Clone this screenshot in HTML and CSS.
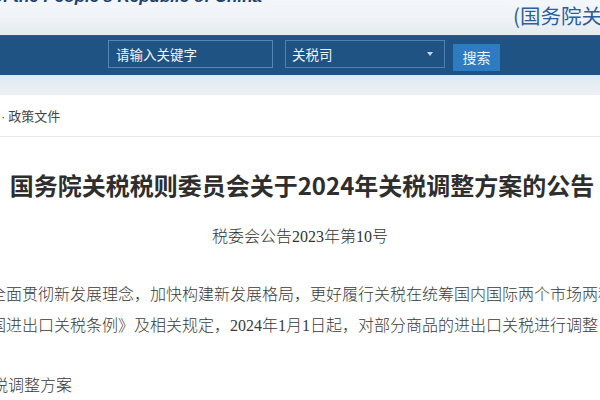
FILE: index.html
```html
<!DOCTYPE html>
<html lang="zh-CN">
<head>
<meta charset="utf-8">
<title>国务院关税税则委员会关于2024年关税调整方案的公告</title>
<link rel="stylesheet" href="styles.css">
</head>
<body>
<header class="top">
  <div class="en-box"><span class="en">Customs Tariff Commission of the State Council of the People's Republic of China</span></div>
  <div class="cn-box">(国务院关税税则委员会)</div>
</header>
<nav class="navbar">
  <div class="search-input">请输入关键字</div>
  <div class="search-select"><span>关税司</span><span class="caret"></span></div>
  <button class="search-btn">搜索</button>
</nav>
<div class="banner-strip"></div>
<div class="crumb"><span class="dot">·</span> 政策文件</div>
<main class="article">
  <h1 class="title">国务院关税税则委员会关于2024年关税调整方案的公告</h1>
  <p class="docno">税委会公告2023年第10号</p>
  <p class="para">全面贯彻新发展理念，加快构建新发展格局，更好履行关税在统筹国内国际两个市场两种资源中的作用，根据《中华人民共和<br>国进出口关税条例》及相关规定，2024年1月1日起，对部分商品的进出口关税进行调整，具体如下。</p>
  <p class="section">税调整方案</p>
</main>
</body>
</html>
```
FILE: styles.css
```css
html, body {
  margin: 0;
  padding: 0;
  overflow: hidden;
  background: #ffffff;
}
body {
  width: 600px;
  height: 400px;
  font-family: "Noto Sans CJK SC", sans-serif;
  color: #333;
}
.top {
  height: 35px;
  display: flex;
  align-items: flex-start;
  overflow: hidden;
  background: linear-gradient(180deg, #f4f7fa 0%, #eef2f6 60%, #e4eaf0 100%);
}
.en-box {
  width: 262px;
  flex: none;
  display: flex;
  justify-content: flex-end;
  overflow: hidden;
  height: 35px;
}
.en {
  white-space: nowrap;
  font-family: "Liberation Sans", Arial, sans-serif;
  font-weight: bold;
  font-style: italic;
  font-size: 17px;
  line-height: 17px;
  color: #22406c;
  margin-top: -12px;
}
.cn-box {
  flex: none;
  margin-left: 251px;
  white-space: nowrap;
  font-size: 20.5px;
  line-height: 22px;
  margin-top: 4px;
  color: #2c5f9e;
}
.navbar {
  height: 40px;
  background: #1f5383;
  display: flex;
  align-items: flex-start;
  padding-left: 108px;
  box-sizing: border-box;
  border-top: 1px solid #2a6094;
}
.search-input {
  width: 165px;
  height: 28px;
  margin-top: 4px;
  box-sizing: border-box;
  border: 1px solid #5688b6;
  color: #eef4fa;
  font-size: 13.5px;
  line-height: 26px;
  padding-left: 7px;
}
.search-select {
  width: 160px;
  height: 28px;
  margin-top: 4px;
  margin-left: 12px;
  box-sizing: border-box;
  border: 1px solid #4f81ae;
  color: #eef4fa;
  font-size: 13.5px;
  line-height: 26px;
  padding-left: 6px;
  padding-right: 11px;
  display: flex;
  justify-content: space-between;
  align-items: center;
}
.caret {
  width: 0;
  height: 0;
  border-left: 3.5px solid transparent;
  border-right: 3.5px solid transparent;
  border-top: 4px solid #c9d6e3;
}
.search-btn {
  width: 47px;
  height: 27px;
  margin-top: 8px;
  margin-left: 8px;
  border: 0;
  padding: 0;
  background: #2d7bc0;
  color: #f2f7fc;
  font-family: "Noto Sans CJK SC", sans-serif;
  font-size: 14px;
  line-height: 27px;
}
.banner-strip {
  height: 20px;
  background: linear-gradient(180deg, #dfe7ef 0%, #e6edf3 50%, #edf1f5 100%);
}
.crumb {
  height: 42px;
  box-sizing: border-box;
  border-bottom: 1px solid #e6e6e6;
  font-size: 13px;
  line-height: 42px;
  color: #444;
  padding-left: 1px;
}
.dot {
  font-family: "Liberation Sans", sans-serif;
}
.article {
  padding-top: 30px;
}
.title {
  margin: 0;
  text-align: center;
  font-size: 24px;
  line-height: 36px;
  font-weight: bold;
  color: #2e2e2e;
  white-space: nowrap;
  padding-left: 4px;
}
.docno {
  margin: 22px 0 0;
  text-align: center;
  font-family: "Liberation Serif", "Noto Sans CJK SC", serif;
  font-size: 16px;
  line-height: 24px;
  color: #333;
  font-weight: 300;
}
.para {
  margin: 30px 0 0 -10px;
  width: 1200px;
  white-space: nowrap;
  font-family: "Liberation Serif", "Noto Sans CJK SC", serif;
  font-size: 16px;
  line-height: 31px;
  color: #3a3a3a;
  font-weight: 300;
}
.section {
  margin: 29px 0 0 -8px;
  white-space: nowrap;
  font-family: "Liberation Serif", "Noto Sans CJK SC", serif;
  font-size: 16px;
  line-height: 31px;
  color: #3a3a3a;
  font-weight: 300;
}
```
